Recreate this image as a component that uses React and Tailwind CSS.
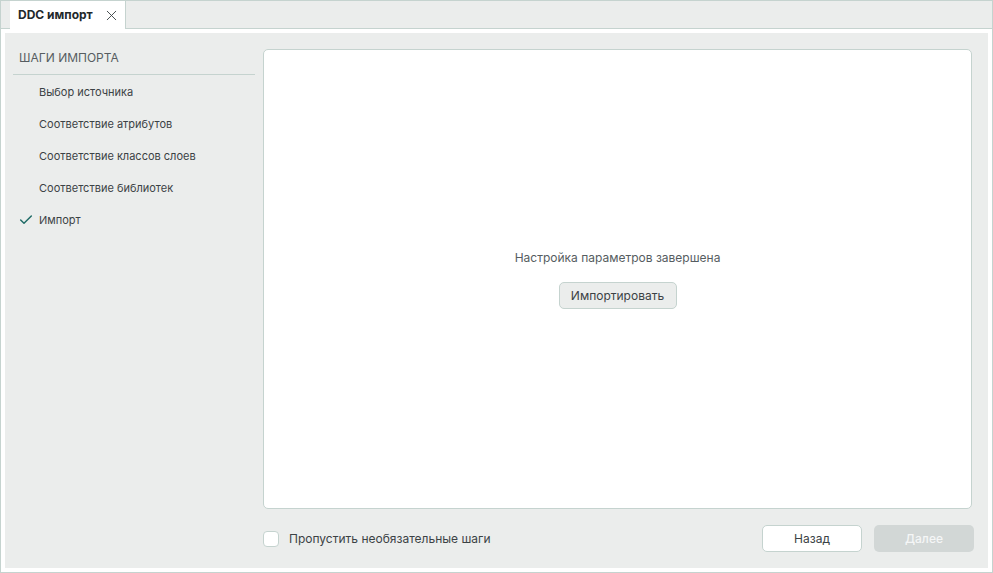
import React from 'react';
import { X, Check } from 'lucide-react';

const STEPS = [
  { label: 'Выбор источника' },
  { label: 'Соответствие атрибутов' },
  { label: 'Соответствие классов слоев' },
  { label: 'Соответствие библиотек' },
  { label: 'Импорт', done: true },
];

const StepRow = ({ label, done }) => (
  <li className="h-8 flex items-center text-[11px] text-[#3b4245]">
    <span className="w-[26px] pl-[5px] flex items-center">
      {done && <Check size={16} strokeWidth={2.2} className="text-[#1f6b66]" />}
    </span>
    {label}
  </li>
);

const App = () => (
  <div className="w-[993px] h-[573px] bg-white border border-[#c5d3cf] flex flex-col font-['Inter',sans-serif] overflow-hidden">
    <div className="h-[28px] shrink-0 bg-[#ebedec] border-b border-[#c5d3cf] pl-[9px] flex">
      <div className="w-[116px] h-[28px] bg-white border-r border-[#c5d3cf] pl-[8px] flex items-center gap-[10px]">
        <span className="text-[12px] font-bold text-[#22282b]">DDC импорт</span>
        <X size={17} strokeWidth={1.3} className="text-[#3b4245]" />
      </div>
    </div>

    <div className="flex-1 m-[4px] bg-[#ebedec] flex">
      <aside className="w-[258px] shrink-0 pl-[8px] pr-[8px] pt-[13px]">
        <div className="h-[29px] border-b border-[#c5d3cf] pl-[6px] text-[12px] leading-[24px] text-[#565d61]">ШАГИ ИМПОРТА</div>
        <ul className="mt-[1px]">
          {STEPS.map((step) => (
            <StepRow key={step.label} {...step} />
          ))}
        </ul>
      </aside>

      <main className="flex-1 flex flex-col pt-[16px] pr-[16px] pb-[16px]">
        <div className="flex-1 bg-white border border-[#c5d3cf] rounded-[5px] flex flex-col items-center justify-center">
          <p className="text-[12px] text-[#565d61]">Настройка параметров завершена</p>
          <button className="mt-[15px] w-[118px] h-[27px] bg-[#ebedec] border border-[#c5d3cf] rounded-[5px] text-[12px] text-[#3b4245]">Импортировать</button>
        </div>
        <div className="mt-[16px] mr-[-2px] flex items-center">
          <span className="w-[16px] h-[16px] bg-white border border-[#c5d3cf] rounded-[4px]" />
          <span className="ml-[10px] text-[12px] text-[#3b4245]">Пропустить необязательные шаги</span>
          <button className="ml-auto w-[100px] h-[27px] bg-white border border-[#c5d3cf] rounded-[5px] text-[12px] text-[#3b4245]">Назад</button>
          <button className="ml-[12px] w-[100px] h-[27px] bg-[#d2d7d6] rounded-[5px] text-[12px] font-medium text-[#f5f6f6]">Далее</button>
        </div>
      </main>
    </div>
  </div>
);

export default App;
